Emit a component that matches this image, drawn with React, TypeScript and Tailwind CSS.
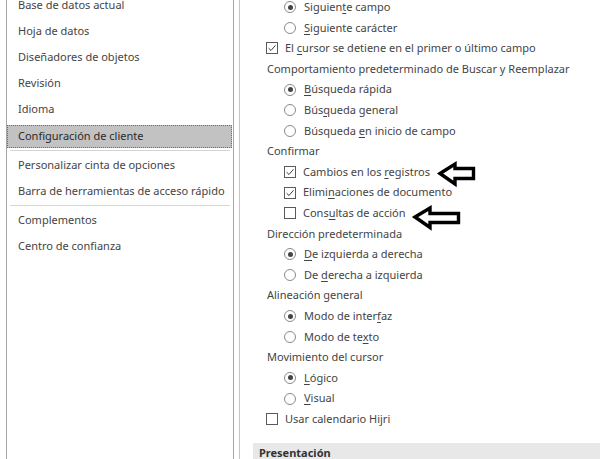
import React from "react";

const font = { fontFamily: '"Noto Sans", "Open Sans", sans-serif' };

function U({ text, i }: { text: string; i: number }) {
  if (i < 0) return <>{text}</>;
  return (
    <>
      {text.slice(0, i)}
      <span className="underline underline-offset-2">{text[i]}</span>
      {text.slice(i + 1)}
    </>
  );
}

function Radio({ checked }: { checked?: boolean }) {
  return (
    <span className="flex h-[12px] w-[12px] shrink-0 items-center justify-center rounded-full border border-[#8a8a8a] bg-white">
      {checked && <span className="h-[5px] w-[5px] rounded-full bg-[#444444]" />}
    </span>
  );
}

function Check({ checked }: { checked?: boolean }) {
  return (
    <span className="flex h-[12px] w-[12px] shrink-0 items-center justify-center border border-[#5a5a5a] bg-white">
      {checked && (
        <svg width="10" height="10" viewBox="0 0 10 10">
          <path d="M1.6 5.2 L4 7.5 L8.5 2.3" fill="none" stroke="#3a3a3a" strokeWidth="1" />
        </svg>
      )}
    </span>
  );
}

type Row =
  | { k: "h"; t: string }
  | { k: "r"; t: string; u: number; c?: boolean }
  | { k: "c0"; t: string; u: number; c?: boolean }
  | { k: "c1"; t: string; u: number; c?: boolean };

const rows: Row[] = [
  { k: "r", t: "Siguiente campo", u: 7, c: true },
  { k: "r", t: "Siguiente carácter", u: 0 },
  { k: "c0", t: "El cursor se detiene en el primer o último campo", u: 3, c: true },
  { k: "h", t: "Comportamiento predeterminado de Buscar y Reemplazar" },
  { k: "r", t: "Búsqueda rápida", u: 0, c: true },
  { k: "r", t: "Búsqueda general", u: 3 },
  { k: "r", t: "Búsqueda en inicio de campo", u: 9 },
  { k: "h", t: "Confirmar" },
  { k: "c1", t: "Cambios en los registros", u: 15, c: true },
  { k: "c1", t: "Eliminaciones de documento", u: 5, c: true },
  { k: "c1", t: "Consultas de acción", u: 4 },
  { k: "h", t: "Dirección predeterminada" },
  { k: "r", t: "De izquierda a derecha", u: 0, c: true },
  { k: "r", t: "De derecha a izquierda", u: 3 },
  { k: "h", t: "Alineación general" },
  { k: "r", t: "Modo de interfaz", u: 13, c: true },
  { k: "r", t: "Modo de texto", u: 10 },
  { k: "h", t: "Movimiento del cursor" },
  { k: "r", t: "Lógico", u: 0, c: true },
  { k: "r", t: "Visual", u: 0 },
  { k: "c0", t: "Usar calendario Hijri", u: -1 },
];

function OptRow({ r }: { r: Row }) {
  const base = "flex h-[20.6px] items-center whitespace-nowrap";
  if (r.k === "h") return <div className={`${base} pl-[27px]`}>{r.t}</div>;
  if (r.k === "r")
    return (
      <div className={`${base} pl-[44px]`}>
        <Radio checked={r.c} />
        <span className="ml-[8px]"><U text={r.t} i={r.u} /></span>
      </div>
    );
  if (r.k === "c0")
    return (
      <div className={`${base} pl-[26px]`}>
        <Check checked={r.c} />
        <span className="ml-[7px]"><U text={r.t} i={r.u} /></span>
      </div>
    );
  return (
    <div className={`${base} pl-[44px]`}>
      <Check checked={r.c} />
      <span className="ml-[7px]"><U text={r.t} i={r.u} /></span>
    </div>
  );
}

function NavItem({ t, sel }: { t: string; sel?: boolean }) {
  if (sel)
    return (
      <div className="flex h-[26px] flex-col justify-end pr-[1px]">
        <div className="flex h-[23px] items-center border border-dotted border-[#6a6a6a] bg-[#c2c2c2] pl-[10px] text-[#2a2a2a]">
          {t}
        </div>
      </div>
    );
  return <div className="flex h-[26px] items-center pl-[11px] whitespace-nowrap">{t}</div>;
}

function Sep({ h }: { h: string }) {
  return (
    <div className={`flex ${h} items-center px-[3px]`}>
      <div className="h-px w-full bg-[#d6d6d6]" />
    </div>
  );
}

export default function App() {
  return (
    <div
      className="relative flex h-[459px] w-[600px] overflow-hidden bg-white text-[11px] text-[#444444]"
      style={font}
    >
      <div className="ml-[6px] h-full w-[228px] shrink-0 border-x border-[#a6a6a6]">
        <div className="mt-[-8px]">
          <NavItem t="Base de datos actual" />
          <NavItem t="Hoja de datos" />
          <NavItem t="Diseñadores de objetos" />
          <NavItem t="Revisión" />
          <NavItem t="Idioma" />
          <NavItem t="Configuración de cliente" sel />
          <Sep h="h-[4px]" />
          <NavItem t="Personalizar cinta de opciones" />
          <NavItem t="Barra de herramientas de acceso rápido" />
          <Sep h="h-[3px]" />
          <NavItem t="Complementos" />
          <NavItem t="Centro de confianza" />
        </div>
      </div>
      <div className="ml-[5px] h-full flex-1 border-l border-[#c6c6c6]">
        <div className="mt-[-3px]">
          {rows.map((r, i) => (
            <OptRow key={i} r={r} />
          ))}
        </div>
        <div className="ml-[13px] mt-[13.7px] flex h-[20px] items-center bg-[#e8e8e8] pl-[6px] font-bold text-[#333]">
          Presentación
        </div>
      </div>
      <svg
        className="pointer-events-none absolute left-0 top-0"
        width="600"
        height="459"
        viewBox="0 0 600 459"
      >
        <polygon
          points="440,173.5 455,164 455,168.5 473.5,168.5 473.5,178.5 455,178.5 455,184"
          fill="none"
          stroke="#000"
          strokeWidth="3.4"
          strokeLinejoin="miter"
        />
        <polygon
          points="415,217 430,208 430,213.5 458.5,213.5 458.5,222.5 430,222.5 430,227.5"
          fill="none"
          stroke="#000"
          strokeWidth="3.4"
          strokeLinejoin="miter"
        />
      </svg>
    </div>
  );
}
